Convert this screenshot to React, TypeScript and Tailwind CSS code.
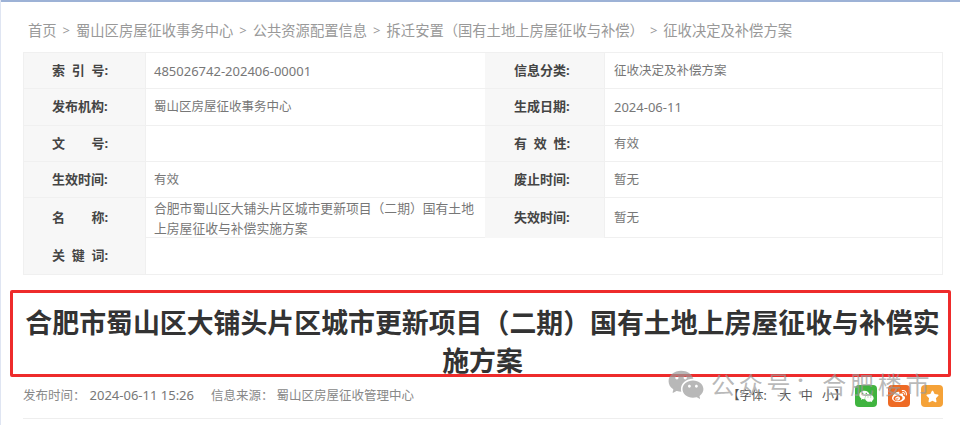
import { FaStar, FaWeibo, FaWeixin } from "react-icons/fa";
import { RiWechatFill } from "react-icons/ri";

const font = "font-['Noto_Sans','Noto_Sans_CJK_SC',sans-serif]";

// ── Data ──────────────────────────────────────────────────────────────────────

const crumbs = [
  "蜀山区房屋征收事务中心",
  "公共资源配置信息",
  "拆迁安置（国有土地上房屋征收与补偿）",
];

type Row = { h: string; a: string; b: string; c?: string; d?: string; bSize?: string; dSize?: string };

const rows: Row[] = [
  { h: "h-[36px]", a: "索  引  号:", b: "485026742-202406-00001", bSize: "text-[13px]", c: "信息分类:", d: "征收决定及补偿方案" },
  { h: "h-[37px]", a: "发布机构:", b: "蜀山区房屋征收事务中心", c: "生成日期:", d: "2024-06-11", dSize: "text-[13px]" },
  { h: "h-[36px]", a: "文　    号:", b: "", c: "有  效  性:", d: "有效" },
  { h: "h-[36px]", a: "生效时间:", b: "有效", c: "废止时间:", d: "暂无" },
  { h: "h-[40px]", a: "名　    称:", b: "合肥市蜀山区大铺头片区城市更新项目（二期）国有土地上房屋征收与补偿实施方案", bSize: "text-[12.8px]", c: "失效时间:", d: "暂无" },
  { h: "h-[36px]", a: "关  键  词:", b: "" },
];

// ── Sub-components ────────────────────────────────────────────────────────────

function Label({ children, right }: { children: string; right?: boolean }) {
  return (
    <div
      className={
        "flex items-center whitespace-pre bg-[#f7f7f7] text-[13px] font-bold text-[#444] " +
        (right ? "pl-[29px]" : "pl-[28px]")
      }
    >
      {children}
    </div>
  );
}

function Value({ children, wide, right, size }: { children: string; wide?: boolean; right?: boolean; size?: string }) {
  return (
    <div
      className={
        "flex items-center border-l border-[#f0f0f0] pr-[8px] leading-[20px] text-[#777] " +
        (size ?? "text-[12.5px]") +
        (right ? " pl-[9px]" : " pl-[8px]") +
        (wide ? " col-span-3" : "")
      }
    >
      {children}
    </div>
  );
}

function InfoTable() {
  return (
    <div className="ml-[22px] mr-[17px] mt-[12px] border border-[#f0f0f0]">
      {rows.map((row) => (
        <div
          key={row.a}
          className={`grid grid-cols-[121px_340px_119px_338px] border-b border-[#f0f0f0] last:border-b-0 ${row.h}`}
        >
          <Label>{row.a}</Label>
          <Value wide={!row.c} size={row.bSize}>
            {row.b}
          </Value>
          {row.c && <Label right>{row.c}</Label>}
          {row.d && (
            <Value right size={row.dSize}>
              {row.d}
            </Value>
          )}
        </div>
      ))}
    </div>
  );
}

function ShareBtn({ bg, children }: { bg: string; children: React.ReactNode }) {
  return (
    <span className={`flex h-[22px] w-[22px] items-center justify-center rounded-[4px] text-white ${bg}`}>
      {children}
    </span>
  );
}

// ── Main Component ────────────────────────────────────────────────────────────

export default function App() {
  return (
    <div className={`relative h-[425px] w-[960px] overflow-hidden border-l border-[#dfe5f2] bg-white ${font}`}>
      {/* top window line */}
      <div className="ml-[-1px] h-[2px] bg-[#9db2d6]" />

      {/* breadcrumb */}
      <div className="ml-[27px] mt-[19px] flex h-[19px] items-center whitespace-nowrap text-[14.3px] text-[#999]">
        <span>首页</span>
        {crumbs.map((c) => (
          <span key={c} className="flex items-center">
            <span className="mx-[6px] text-[13px]">&gt;</span>
            {c}
          </span>
        ))}
        <span className="mx-[6px] text-[13px]">&gt;</span>
        <span>征收决定及补偿方案</span>
      </div>

      <InfoTable />

      {/* title with red annotation box */}
      <div className="ml-[9px] mt-[15px] h-[87px] w-[941px] rounded-[2px] border-[3px] border-[#ee2b2b] pl-[10px] pr-[6px] pt-[11px] text-center text-[26.9px] font-bold leading-[38px] text-[#333]">
        合肥市蜀山区大铺头片区城市更新项目（二期）国有土地上房屋征收与补偿实施方案
      </div>

      {/* meta row */}
      <div className="ml-[22px] mr-[17px] mt-[8px] flex h-[22px] items-center text-[12.5px] text-[#888]">
        <span>发布时间：</span>
        <span className="ml-[4px] text-[13px] text-[#777]">2024-06-11 15:26</span>
        <span className="ml-[17px]">信息来源：</span>
        <span className="ml-[3px]">蜀山区房屋征收管理中心</span>
        <span className="ml-auto mr-[9px] whitespace-pre text-[12px] text-[#555]">【字体:    大   中   小】</span>
        <span className="flex gap-[11px]">
          <ShareBtn bg="bg-[#3fb43f]">
            <FaWeixin className="h-[15px] w-[15px]" />
          </ShareBtn>
          <ShareBtn bg="bg-[#ee6a24]">
            <FaWeibo className="h-[15px] w-[15px]" />
          </ShareBtn>
          <ShareBtn bg="bg-[#f5a238]">
            <FaStar className="h-[13px] w-[13px]" />
          </ShareBtn>
        </span>
      </div>

      {/* bottom divider */}
      <div className="ml-[22px] mr-[17px] mt-[11px] h-px bg-[#eeeeee]" />

      {/* watermark */}
      <div className="pointer-events-none absolute left-[666px] top-[366px] flex items-center gap-[6px] whitespace-nowrap text-[24px] leading-[36px] tracking-[3.8px] text-[#9a9a9a]/70">
        <RiWechatFill className="h-[38px] w-[38px]" />
        <span>公众号：合肥楼市</span>
      </div>
    </div>
  );
}
